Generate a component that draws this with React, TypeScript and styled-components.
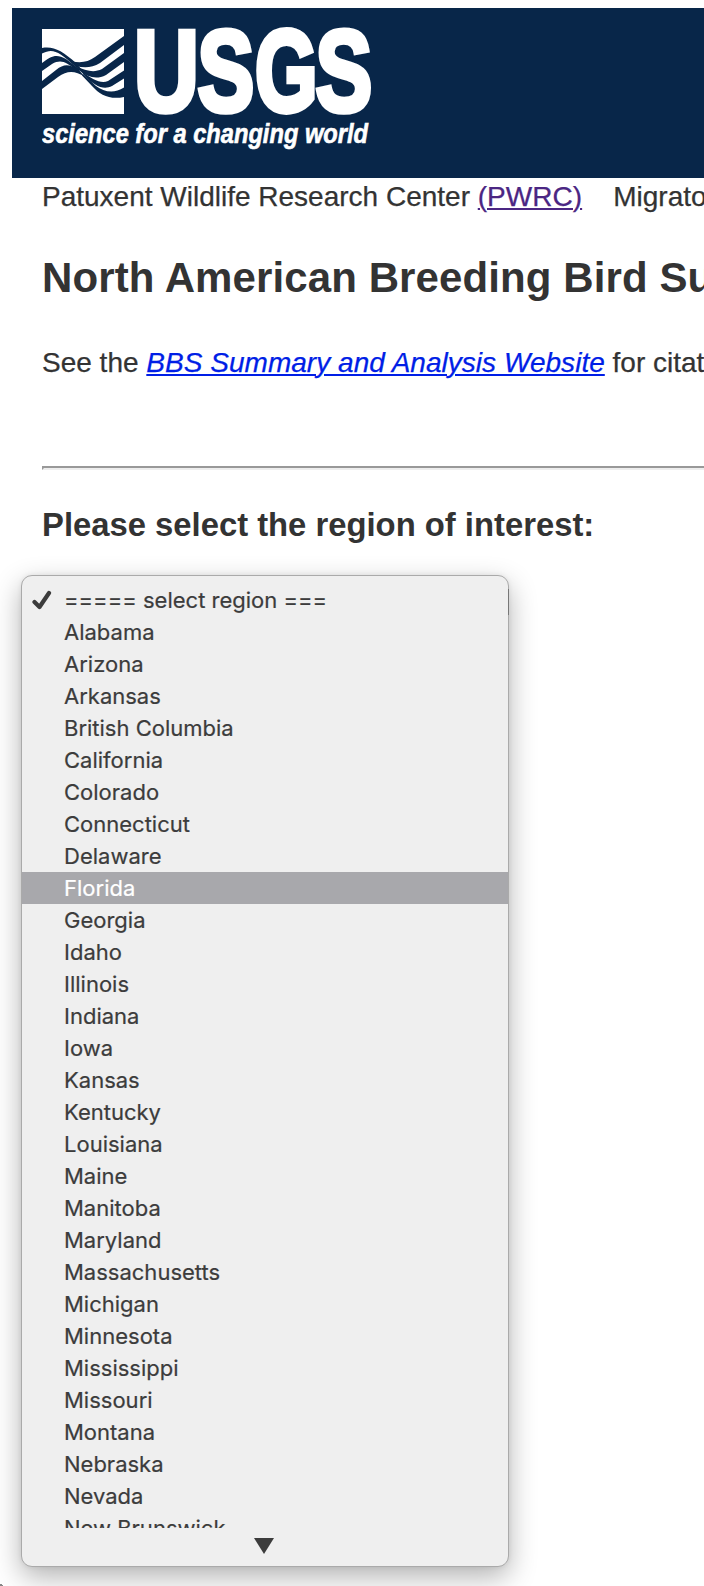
import React from "react";
import styled, { createGlobalStyle } from "styled-components";

const Global = createGlobalStyle`
  * { box-sizing: border-box; }
  html, body { margin: 0; padding: 0; background: #fff; }
  body { overflow: hidden; }
`;

const Page = styled.div`
  position: relative;
  width: 704px;
  height: 1586px;
  padding: 8px 0 0 12px;
  overflow: hidden;
  color: #333;
  background: linear-gradient(30deg, #888 45%, transparent 45%) 0 100% / 4px 3px no-repeat;
  font: 28px/32px "Liberation Sans", Arial, sans-serif;
  white-space: nowrap;
`;

const Banner = styled.header`
  height: 170px;
  padding-left: 30px;
  background: #082649;
`;

const Logo = styled.svg`
  display: block;
`;

const LogoLetter = styled.text`
  font: 700 115px "Liberation Sans", Arial, sans-serif;
  stroke: #fff;
  stroke-width: 5px;
  vector-effect: non-scaling-stroke;
`;

const Tagline = styled.text`
  font: italic 700 27px "Liberation Sans", Arial, sans-serif;
  stroke: #fff;
  stroke-width: 0.6px;
`;

const Content = styled.main`
  padding-left: 30px;
`;

const Line = styled.p<{ $top: number }>`
  margin: ${(p) => p.$top}px 0 0;
  -webkit-text-stroke: 0.25px;
`;

const Link = styled.a<{ $visited?: boolean }>`
  color: ${(p) => (p.$visited ? "#4b2683" : "#001ee6")};
  text-decoration: underline;
  text-decoration-thickness: 2px;
  text-underline-offset: 2px;
  letter-spacing: 0.03px;
`;

const Title = styled.h1`
  margin: 40px 0 0;
  font-size: 42px;
  line-height: 50px;
  letter-spacing: 0.1px;
`;

const Rule = styled.hr`
  height: 4px;
  margin: 87px -4px 0 0;
  border: 2px solid #eee;
  border-top-color: #999;
  border-left-color: #999;
`;

const Prompt = styled.h2`
  margin: 35px 0 0;
  font-size: 32.8px;
  line-height: 40px;
`;

const Menu = styled.div`
  position: absolute;
  left: 21px;
  top: 575px;
  width: 488px;
  height: 992px;
  padding-top: 8px;
  border: 1px solid #aaa;
  border-radius: 11px;
  background: #efefef;
  box-shadow: 0 10px 28px rgba(0, 0, 0, 0.3), 0 0 5px rgba(0, 0, 0, 0.08);
  font: 22px/32px Inter, sans-serif;

  &::after {
    content: "";
    position: absolute;
    top: 13px;
    right: -1px;
    width: 1px;
    height: 26px;
    background: #777;
  }
`;

const Options = styled.div`
  height: 944px;
  overflow: hidden;
  -webkit-text-stroke: 0.2px;
`;

const Option = styled.div<{ $active?: boolean }>`
  display: flex;
  align-items: center;
  height: 32px;
  color: ${(p) => (p.$active ? "#fff" : "#3c3c3c")};
  background: ${(p) => (p.$active ? "#a8a8ac" : "transparent")};
`;

const Mark = styled.span`
  display: flex;
  width: 42px;
  padding-left: 10px;
`;

const Scroll = styled.div`
  display: flex;
  justify-content: center;
  padding: 10px 2px 0 0;
`;

const regions = [
  "===== select region ===", "Alabama", "Arizona", "Arkansas", "British Columbia",
  "California", "Colorado", "Connecticut", "Delaware", "Florida", "Georgia", "Idaho",
  "Illinois", "Indiana", "Iowa", "Kansas", "Kentucky", "Louisiana", "Maine", "Manitoba",
  "Maryland", "Massachusetts", "Michigan", "Minnesota", "Mississippi", "Missouri",
  "Montana", "Nebraska", "Nevada", "New Brunswick",
];

export default function App() {
  return (
    <Page>
      <Global />
      <Banner>
        <Logo width="340" height="150" viewBox="42 8 340 150" fill="#fff">
          <path d="M42 29H124V114H42Z" />
          <g fill="#082649">
            <path d="M124 36L95 57C88 62 82 63 72 61.5L76 66C84 68 92 68 100 63L124 45Z" />
            <path d="M124 53L102 69C94 73 86 71 76 66L80 71C88 77 96 80 106 75L124 62Z" />
            <path d="M124 70.5L108 81C101 84 93 80 80 70L84 75C95 87 104 90 112 86L124 78.5Z" />
            <path d="M124 87.5C114 94 104 92 96 86L83 74L82 75.5L92 86C100 95 110 100 124 97Z" />
            <path d="M42 48C54 46 62 51 76 63L82 70L76 67C58 51 53 48 42 53.5Z" />
            <path d="M42 63C52 55 57 54 66 59L82 71L76 70C66 62 61 59 52 64L42 71Z" />
            <path d="M42 81L56 70C64 64 68 64 78 69L85 77C75 71 68 70 58 77L42 89Z" />
          </g>
          <LogoLetter transform="translate(134 111) scale(.78 1)">U</LogoLetter>
          <LogoLetter transform="translate(197.5 111) scale(.74 1)">S</LogoLetter>
          <LogoLetter transform="translate(255 111) scale(.7 1)">G</LogoLetter>
          <LogoLetter transform="translate(315.5 111) scale(.74 1)">S</LogoLetter>
          <Tagline x="42" y="142.5" textLength="326" lengthAdjust="spacingAndGlyphs">science for a changing world</Tagline>
        </Logo>
      </Banner>
      <Content>
        <Line $top={3}>Patuxent Wildlife Research Center <Link $visited>(PWRC)</Link>&nbsp;&nbsp;&nbsp; Migratory Bird</Line>
        <Title>North American Breeding Bird Survey</Title>
        <Line $top={44}>See the <Link><i>BBS Summary and Analysis Website</i></Link> for citation</Line>
        <Rule />
        <Prompt>Please select the region of interest:</Prompt>
      </Content>
      <Menu>
        <Options>
          {regions.map((name, i) => (
            <Option key={name} $active={name === "Florida"}>
              <Mark>
                {i === 0 && (
                  <svg width="20" height="20" viewBox="0 0 20 20" fill="none" stroke="#3c3c3c">
                    <path d="M2.5 12L7.5 17L17 3" strokeWidth="4.2" strokeLinecap="round" strokeLinejoin="round" />
                  </svg>
                )}
              </Mark>
              {name}
            </Option>
          ))}
        </Options>
        <Scroll>
          <svg width="20" height="16" viewBox="0 0 20 16" fill="#3c3c3c"><path d="M0 0H20L10 16Z" /></svg>
        </Scroll>
      </Menu>
    </Page>
  );
}
